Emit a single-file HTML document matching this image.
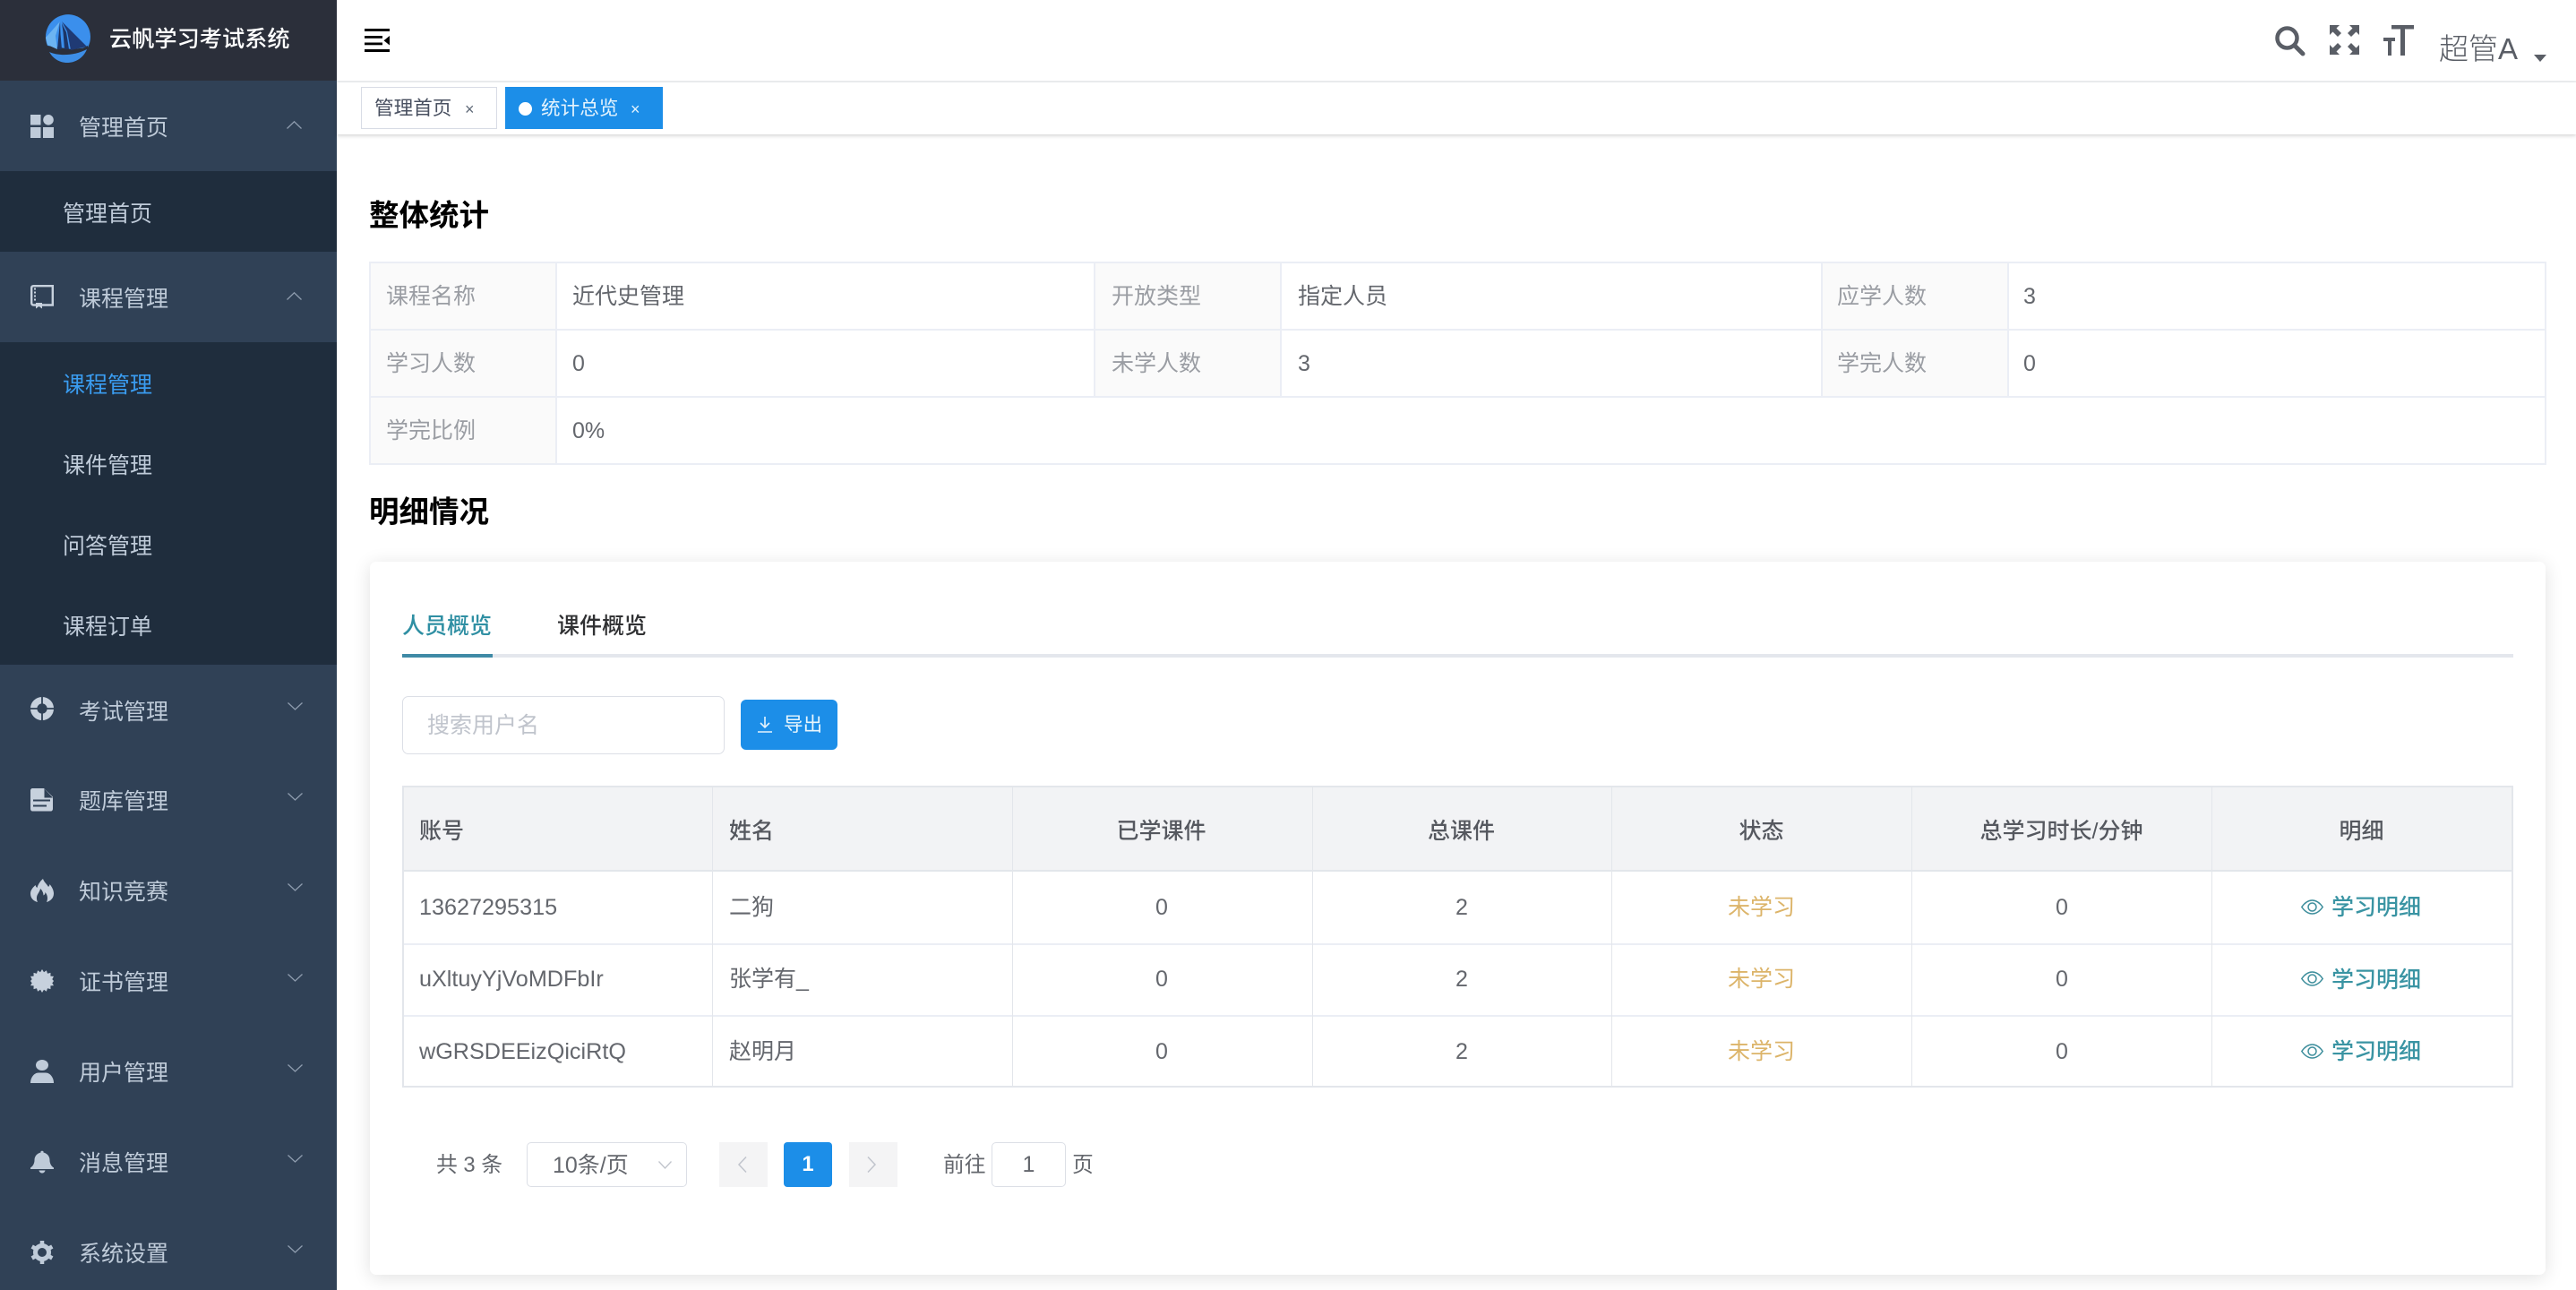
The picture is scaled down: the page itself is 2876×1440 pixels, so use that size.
<!DOCTYPE html>
<html lang="zh"><head><meta charset="utf-8"><title>云帆学习考试系统</title>
<style>
*{box-sizing:border-box;margin:0;padding:0}
html,body{width:2876px;height:1440px;overflow:hidden;background:#fff}
body{position:relative;font-family:"Liberation Sans","Noto Sans CJK SC",sans-serif;font-size:25px;color:#64676d}
.a,.t{position:absolute}
.t{white-space:nowrap;line-height:40px;height:40px}
.c{text-align:center}
svg{position:absolute;overflow:visible}
.m{color:#bfcbd9}
.lb{color:#9a9da3}
.th{color:#55585f;font-weight:500}
.w{color:#dcb469}
.lk{color:#3a94a3;font-weight:500}
.ln{position:absolute;background:#ebeef5}
</style></head><body>

<!-- sidebar -->
<div class="a" style="left:0;top:0;width:376px;height:1440px;background:#304156"></div>
<div class="a" style="left:0;top:0;width:376px;height:90px;background:#2b2f3a"></div>
<div class="a" style="left:0;top:191px;width:376px;height:90px;background:#1f2d3d"></div>
<div class="a" style="left:0;top:382px;width:376px;height:360px;background:#1f2d3d"></div>

<!-- logo -->
<svg style="left:50px;top:20px" width="50" height="50" viewBox="0 0 50 50">
<path d="M3 31A25 25 0 1 1 48 33L30 35L3 31Z" fill="#3b8fec"/>
<path d="M17 4L1 22L3 30L14 35L12 20Z" fill="#6cb4f2"/>
<path d="M17 4L14 35L19 35L17.500 18Z M19 6L24 16L27 35L22 35L20.500 16Z" fill="#1c3566"/>
<path d="M19 4L47 32L29 36L25 15Z" fill="#1f3a74"/>
<path d="M3 35C14 40 34 39 48 31L48 34C36 42 14 43 3 35Z" fill="#2b2f3a"/>
<path d="M5 38C16 43 34 42 47 35C43 45 34 50 25 50C16 50 9 45 5 38Z" fill="#3d8ee6"/>
</svg>
<div class="t" style="left:122px;top:24px;color:#fff;font-weight:500;font-size:25.200px">云帆学习考试系统</div>

<!-- menu texts -->
<div class="t m" style="left:88px;top:123px">管理首页</div>
<div class="t m" style="left:70px;top:219px">管理首页</div>
<div class="t m" style="left:88px;top:314px">课程管理</div>
<div class="t" style="left:70px;top:410px;color:#3a9cf0">课程管理</div>
<div class="t m" style="left:70px;top:500px">课件管理</div>
<div class="t m" style="left:70px;top:590px">问答管理</div>
<div class="t m" style="left:70px;top:680px">课程订单</div>
<div class="t m" style="left:88px;top:775px">考试管理</div>
<div class="t m" style="left:88px;top:875px">题库管理</div>
<div class="t m" style="left:88px;top:976px">知识竞赛</div>
<div class="t m" style="left:88px;top:1077px">证书管理</div>
<div class="t m" style="left:88px;top:1178px">用户管理</div>
<div class="t m" style="left:88px;top:1279px">消息管理</div>
<div class="t m" style="left:88px;top:1380px">系统设置</div>

<!-- chevrons -->
<svg style="left:320px;top:135px" width="17" height="9"><path d="M0.500 8.500L8.500 0.800L16.500 8.500" fill="none" stroke="#8e9cae" stroke-width="1.300"/></svg>
<svg style="left:320px;top:326px" width="17" height="9"><path d="M0.500 8.500L8.500 0.800L16.500 8.500" fill="none" stroke="#8e9cae" stroke-width="1.300"/></svg>
<svg style="left:321px;top:784px" width="17" height="9"><path d="M0.500 0.500L8.500 8L16.500 0.500" fill="none" stroke="#8e9cae" stroke-width="1.300"/></svg>
<svg style="left:321px;top:885px" width="17" height="9"><path d="M0.500 0.500L8.500 8L16.500 0.500" fill="none" stroke="#8e9cae" stroke-width="1.300"/></svg>
<svg style="left:321px;top:986px" width="17" height="9"><path d="M0.500 0.500L8.500 8L16.500 0.500" fill="none" stroke="#8e9cae" stroke-width="1.300"/></svg>
<svg style="left:321px;top:1087px" width="17" height="9"><path d="M0.500 0.500L8.500 8L16.500 0.500" fill="none" stroke="#8e9cae" stroke-width="1.300"/></svg>
<svg style="left:321px;top:1188px" width="17" height="9"><path d="M0.500 0.500L8.500 8L16.500 0.500" fill="none" stroke="#8e9cae" stroke-width="1.300"/></svg>
<svg style="left:321px;top:1289px" width="17" height="9"><path d="M0.500 0.500L8.500 8L16.500 0.500" fill="none" stroke="#8e9cae" stroke-width="1.300"/></svg>
<svg style="left:321px;top:1390px" width="17" height="9"><path d="M0.500 0.500L8.500 8L16.500 0.500" fill="none" stroke="#8e9cae" stroke-width="1.300"/></svg>

<!-- sidebar icons -->
<svg style="left:34px;top:128px" width="26" height="26" fill="#bfcbd9"><rect width="11.500" height="11.500"/><circle cx="20" cy="5.800" r="5.800"/><rect y="14" width="11.500" height="12"/><rect x="14" y="14" width="12" height="12"/></svg>
<svg style="left:34px;top:318px" width="26" height="26"><path d="M3.500 1.200H24.800V22.500H3.500C2 22.500 1.200 21.500 1.200 20.400V3.400C1.200 2 2 1.200 3.500 1.200Z" fill="none" stroke="#c7d1dd" stroke-width="2.400"/><path d="M5 3.500V18" stroke="#c7d1dd" stroke-width="2" stroke-dasharray="2 2"/><path d="M6 20H13V26.500L9.500 24L6 26.500Z" fill="#c7d1dd"/></svg>
<svg style="left:34px;top:778px" width="26" height="26" viewBox="0 0 26 26"><circle cx="13" cy="13" r="9.300" fill="none" stroke="#c7d1dd" stroke-width="7.400"/><path d="M13 0V8M13 18V26M0 13H8M18 13H26" stroke="#304156" stroke-width="1.800"/></svg>
<svg style="left:34px;top:880px" width="26" height="26" viewBox="0 0 26 26"><path d="M2.500 0H15L25 9.500V22.500C25 24.500 24 25.500 22.500 25.500H2.500C1 25.500 0 24.500 0 22.500V2.500C0 1 1 0 2.500 0Z" fill="#c7d1dd"/><path d="M15.500 0.500L25 10.500H15.500Z" fill="#304156" transform="translate(0,0)"/><path d="M3 13.500H22M3 19.500H18" stroke="#304156" stroke-width="2"/></svg>
<svg style="left:34px;top:981px" width="26" height="26" viewBox="0 0 26 26"><path d="M14 0C15 3.500 18.500 6 20 9C21 8 21.500 7 21.500 6C24.500 9.500 26 13.500 26 16.500C26 21.500 22 25 18 26C19.500 23 19.500 18.500 16.500 15C16.500 17 15.500 18 14.500 18.500C14.500 15.500 13 12.500 11 11C10.500 14 8.500 16 7.500 18.500C6.500 21 7 24 8 26C3.500 25 0 21.500 0 16.500C0 12.500 3 9.500 5.500 7C6 8.500 6.500 9.500 7.500 10C8.500 6 11 2.500 14 0Z" fill="#c7d1dd"/></svg>
<svg style="left:34px;top:1082px" width="26" height="26" viewBox="0 0 26 26"><path d="M13 0L15 3.300L17.900 1.200L19 4.800L22.500 3.900L22.400 7.600L26 7.900L24.300 11.100L26 13L24.300 15.400L26 18.100L22.400 18.400L22.500 22.100L19 21.200L17.900 24.800L15 22.700L13 26L11 22.700L8.100 24.800L7 21.200L3.500 22.100L3.600 18.400L0 18.100L1.700 15.400L0 13L1.700 11.100L0 7.900L3.600 7.600L3.500 3.900L7 4.800L8.100 1.200L11 3.300Z" fill="#c7d1dd"/></svg>
<svg style="left:34px;top:1183px" width="26" height="26" viewBox="0 0 26 26" fill="#bfcbd9"><ellipse cx="13" cy="6" rx="7" ry="6"/><path d="M0 26C0 20 4 14.500 9 14.500H17C22 14.500 26 20 26 26Z"/></svg>
<svg style="left:34px;top:1284px" width="26" height="26" viewBox="0 0 26 26" fill="#bfcbd9"><path d="M11.500 1.500C11.500 0.500 14.500 0.500 14.500 1.500V2.500C19 3.500 21.500 7 21.500 11C21.500 15 23.500 18 26 19.500V21H0V19.500C2.500 18 4.500 15 4.500 11C4.500 7 7 3.500 11.500 2.500Z"/><path d="M9.500 22.500H16.500C16 24.500 14.500 25.500 13 25.500C11.500 25.500 10 24.500 9.500 22.500Z"/></svg>
<svg style="left:34px;top:1385px" width="26" height="26" viewBox="0 0 26 26"><circle cx="13" cy="13" r="7.500" fill="none" stroke="#bfcbd9" stroke-width="5"/><g stroke="#bfcbd9" stroke-width="4.500"><path d="M13 0V5M13 21V26M1.700 6.500L6 9M20 17L24.300 19.500M1.700 19.500L6 17M20 9L24.300 6.500"/></g></svg>

<!-- navbar -->
<svg style="left:407px;top:32px" width="28" height="26" fill="#000"><rect width="28" height="3"/><rect y="8" width="20" height="2.800"/><rect y="15.500" width="20" height="2.800"/><rect y="23" width="28" height="3"/><path d="M28 8V18.500L21.500 13.200Z"/></svg>
<div class="a" style="left:376px;top:90px;width:2500px;height:2px;background:#eef0f2"></div>

<svg style="left:2540px;top:29px" width="33" height="33"><circle cx="13.500" cy="13.500" r="11" fill="none" stroke="#5a5e66" stroke-width="4.500"/><path d="M22 22L31 31" stroke="#5a5e66" stroke-width="5" stroke-linecap="round"/></svg>
<svg style="left:2601px;top:28px" width="33" height="33" fill="#5a5e66"><path d="M0 0H11L7.500 3.500L13 9L9 13L3.500 7.500L0 11Z"/><path d="M33 0H22L25.500 3.500L20 9L24 13L29.500 7.500L33 11Z"/><path d="M0 33H11L7.500 29.500L13 24L9 20L3.500 25.500L0 22Z"/><path d="M33 33H22L25.500 29.500L20 24L24 20L29.500 25.500L33 22Z"/></svg>
<svg style="left:2661px;top:28px" width="34" height="34" fill="#5a5e66"><path d="M9 0H34V4.500H24V34H19V4.500H9Z"/><path d="M0 14H13V18H9V34H5V18H0Z"/></svg>
<div class="t" style="left:2723px;top:35px;font-size:33px;line-height:40px;color:#5a5e66;font-weight:300">超管A</div>
<svg style="left:2829px;top:61px" width="14" height="8" fill="#5a5e66"><path d="M0 0H14L7 8Z"/></svg>

<!-- tags -->
<div class="a" style="left:376px;top:92px;width:2500px;height:58px;background:#fff;box-shadow:0 2px 4px rgba(0,0,0,.14),0 0 3px rgba(0,0,0,.05)"></div>
<div class="a" style="left:403px;top:97px;width:152px;height:47px;border:1.500px solid #d8dce5;background:#fff"></div>
<div class="t" style="left:418px;top:101px;font-size:21.600px;color:#495060">管理首页</div>
<div class="t" style="left:519px;top:102px;font-size:18px;color:#606a78">×</div>
<div class="a" style="left:564px;top:97px;width:176px;height:47px;background:#1c8ee8"></div>
<div class="a" style="left:579px;top:113.500px;width:15px;height:15px;border-radius:50%;background:#fff"></div>
<div class="t" style="left:604px;top:101px;font-size:21.600px;color:#e4f3fd">统计总览</div>
<div class="t" style="left:704px;top:102px;font-size:18px;color:#e4f3fd">×</div>

<!-- headings -->
<div class="t" style="left:412px;top:221.500px;font-size:33.500px;font-weight:700;color:#000">整体统计</div>
<div class="t" style="left:412px;top:552.500px;font-size:33.500px;font-weight:700;color:#000">明细情况</div>

<!-- descriptions -->
<div class="a" style="left:413px;top:293px;width:207px;height:225px;background:#fafafa"></div>
<div class="a" style="left:1221px;top:293px;width:209px;height:150px;background:#fafafa"></div>
<div class="a" style="left:2033px;top:293px;width:208px;height:150px;background:#fafafa"></div>
<div class="ln" style="left:413px;top:292px;width:2429px;height:2px"></div>
<div class="ln" style="left:413px;top:367px;width:2429px;height:2px"></div>
<div class="ln" style="left:413px;top:442px;width:2429px;height:2px"></div>
<div class="ln" style="left:413px;top:517px;width:2429px;height:2px"></div>
<div class="ln" style="left:412px;top:292px;width:2px;height:227px"></div>
<div class="ln" style="left:620px;top:292px;width:2px;height:227px"></div>
<div class="ln" style="left:2841px;top:292px;width:2px;height:227px"></div>
<div class="ln" style="left:1221px;top:292px;width:2px;height:151px"></div>
<div class="ln" style="left:1429px;top:292px;width:2px;height:151px"></div>
<div class="ln" style="left:2033px;top:292px;width:2px;height:151px"></div>
<div class="ln" style="left:2241px;top:292px;width:2px;height:151px"></div>

<div class="t lb" style="left:431px;top:311px">课程名称</div>
<div class="t" style="left:639px;top:311px">近代史管理</div>
<div class="t lb" style="left:1241px;top:311px">开放类型</div>
<div class="t" style="left:1449px;top:311px">指定人员</div>
<div class="t lb" style="left:2051px;top:311px">应学人数</div>
<div class="t" style="left:2259px;top:311px">3</div>
<div class="t lb" style="left:431px;top:386px">学习人数</div>
<div class="t" style="left:639px;top:386px">0</div>
<div class="t lb" style="left:1241px;top:386px">未学人数</div>
<div class="t" style="left:1449px;top:386px">3</div>
<div class="t lb" style="left:2051px;top:386px">学完人数</div>
<div class="t" style="left:2259px;top:386px">0</div>
<div class="t lb" style="left:431px;top:461px">学完比例</div>
<div class="t" style="left:639px;top:461px">0%</div>

<!-- card -->
<div class="a" style="left:413px;top:627px;width:2429px;height:796px;background:#fff;border-radius:7px;box-shadow:0 3px 20px rgba(0,0,0,.12)"></div>

<div class="t" style="left:449px;top:679px;color:#2f8fa3;font-weight:500">人员概览</div>
<div class="t" style="left:622px;top:679px;color:#303133;font-weight:500">课件概览</div>
<div class="a" style="left:449px;top:730px;width:2357px;height:4px;background:#e4e7ed"></div>
<div class="a" style="left:449px;top:730px;width:101px;height:4px;background:#3f8aa6"></div>

<div class="a" style="left:449px;top:777px;width:360px;height:65px;border:1.500px solid #dcdfe6;border-radius:7px;background:#fff"></div>
<div class="t" style="left:477px;top:790px;color:#c0c4cc">搜索用户名</div>
<div class="a" style="left:827px;top:781px;width:108px;height:56px;background:#1c8ee8;border-radius:6px"></div>
<svg style="left:846px;top:800px" width="16" height="18"><path d="M8 0V11M3 7L8 12L13 7M0 17H16" fill="none" stroke="#e4f3fd" stroke-width="1.600"/></svg>
<div class="t" style="left:875px;top:789px;font-size:21.600px;color:#e8f6fd">导出</div>

<!-- table -->
<div class="a" style="left:449px;top:878px;width:2357px;height:94px;background:#f2f3f5"></div>
<div class="ln" style="left:449px;top:877px;width:2357px;height:2px;background:#e3e6eb"></div>
<div class="ln" style="left:449px;top:971px;width:2357px;height:2px;background:#e3e6eb"></div>
<div class="ln" style="left:449px;top:1053px;width:2357px;height:1.500px"></div>
<div class="ln" style="left:449px;top:1133px;width:2357px;height:1.500px"></div>
<div class="ln" style="left:449px;top:1212px;width:2357px;height:2px;background:#e3e6eb"></div>
<div class="ln" style="left:449px;top:877px;width:1.500px;height:337px;background:#e3e6eb"></div>
<div class="ln" style="left:794.500px;top:877px;width:1px;height:337px;background:#e3e6eb"></div>
<div class="ln" style="left:1129.500px;top:877px;width:1px;height:337px;background:#e3e6eb"></div>
<div class="ln" style="left:1464.500px;top:877px;width:1px;height:337px;background:#e3e6eb"></div>
<div class="ln" style="left:1799px;top:877px;width:1px;height:337px;background:#e3e6eb"></div>
<div class="ln" style="left:2134px;top:877px;width:1px;height:337px;background:#e3e6eb"></div>
<div class="ln" style="left:2469px;top:877px;width:1px;height:337px;background:#e3e6eb"></div>
<div class="ln" style="left:2804px;top:877px;width:2px;height:337px;background:#e3e6eb"></div>

<div class="t th" style="left:468px;top:908px">账号</div>
<div class="t th" style="left:814px;top:908px">姓名</div>
<div class="t th c" style="left:1130px;top:908px;width:333px">已学课件</div>
<div class="t th c" style="left:1465px;top:908px;width:333px">总课件</div>
<div class="t th c" style="left:1800px;top:908px;width:333px">状态</div>
<div class="t th c" style="left:2135px;top:908px;width:333px">总学习时长/分钟</div>
<div class="t th c" style="left:2470px;top:908px;width:333px">明细</div>

<div class="t" style="left:468px;top:993px;font-size:25.200px">13627295315</div>
<div class="t" style="left:814px;top:993px">二狗</div>
<div class="t c" style="left:1130px;top:993px;width:334px">0</div>
<div class="t c" style="left:1465px;top:993px;width:334px">2</div>
<div class="t c w" style="left:1800px;top:993px;width:333px">未学习</div>
<div class="t c" style="left:2135px;top:993px;width:334px">0</div>
<div class="t lk" style="left:2603px;top:993px">学习明细</div>

<div class="t" style="left:468px;top:1073px;font-size:25.200px">uXltuyYjVoMDFbIr</div>
<div class="t" style="left:814px;top:1073px">张学有_</div>
<div class="t c" style="left:1130px;top:1073px;width:334px">0</div>
<div class="t c" style="left:1465px;top:1073px;width:334px">2</div>
<div class="t c w" style="left:1800px;top:1073px;width:333px">未学习</div>
<div class="t c" style="left:2135px;top:1073px;width:334px">0</div>
<div class="t lk" style="left:2603px;top:1074px">学习明细</div>

<div class="t" style="left:468px;top:1154px;font-size:25.200px">wGRSDEEizQiciRtQ</div>
<div class="t" style="left:814px;top:1154px">赵明月</div>
<div class="t c" style="left:1130px;top:1154px;width:334px">0</div>
<div class="t c" style="left:1465px;top:1154px;width:334px">2</div>
<div class="t c w" style="left:1800px;top:1154px;width:333px">未学习</div>
<div class="t c" style="left:2135px;top:1154px;width:334px">0</div>
<div class="t lk" style="left:2603px;top:1154px">学习明细</div>

<svg style="left:2569px;top:1004px" width="25" height="17"><path d="M0.800 8.500C5 2.500 9 1 12.500 1S20 2.500 24.200 8.500C20 14.500 16 16 12.500 16S5 14.500 0.800 8.500Z" fill="none" stroke="#3d8e9c" stroke-width="1.500"/><circle cx="12.500" cy="8.500" r="4.500" fill="none" stroke="#3d8e9c" stroke-width="1.500"/></svg>
<svg style="left:2569px;top:1084px" width="25" height="17"><path d="M0.800 8.500C5 2.500 9 1 12.500 1S20 2.500 24.200 8.500C20 14.500 16 16 12.500 16S5 14.500 0.800 8.500Z" fill="none" stroke="#3d8e9c" stroke-width="1.500"/><circle cx="12.500" cy="8.500" r="4.500" fill="none" stroke="#3d8e9c" stroke-width="1.500"/></svg>
<svg style="left:2569px;top:1165px" width="25" height="17"><path d="M0.800 8.500C5 2.500 9 1 12.500 1S20 2.500 24.200 8.500C20 14.500 16 16 12.500 16S5 14.500 0.800 8.500Z" fill="none" stroke="#3d8e9c" stroke-width="1.500"/><circle cx="12.500" cy="8.500" r="4.500" fill="none" stroke="#3d8e9c" stroke-width="1.500"/></svg>

<!-- pagination -->
<div class="t" style="left:487px;top:1281px;font-size:23.800px">共 3 条</div>
<div class="a" style="left:588px;top:1275px;width:179px;height:50px;border:1.500px solid #dcdfe6;border-radius:5px"></div>
<div class="t" style="left:617px;top:1281px;font-size:25px">10条/页</div>
<svg style="left:735px;top:1296px" width="15" height="9"><path d="M0.500 0.500L7.500 8L14.500 0.500" fill="none" stroke="#c0c4cc" stroke-width="1.300"/></svg>
<div class="a" style="left:803px;top:1275px;width:54px;height:50px;background:#f4f4f5"></div>
<svg style="left:824px;top:1291px" width="10" height="18"><path d="M9 0.500L1 9L9 17.500" fill="none" stroke="#c0c4cc" stroke-width="1.500"/></svg>
<div class="a c" style="left:875px;top:1275px;width:54px;height:50px;background:#1c8ee8;border-radius:4px;color:#fff;font-size:23.800px;font-weight:700;line-height:50px">1</div>
<div class="a" style="left:948px;top:1275px;width:54px;height:50px;background:#f4f4f5"></div>
<svg style="left:968px;top:1291px" width="10" height="18"><path d="M1 0.500L9 9L1 17.500" fill="none" stroke="#c0c4cc" stroke-width="1.500"/></svg>
<div class="t" style="left:1053px;top:1281px;font-size:23.800px">前往</div>
<div class="a c" style="left:1107px;top:1275px;width:83px;height:50px;border:1.500px solid #dcdfe6;border-radius:5px;font-size:25px;line-height:49px">1</div>
<div class="t" style="left:1197px;top:1281px;font-size:23.800px">页</div>

</body></html>
